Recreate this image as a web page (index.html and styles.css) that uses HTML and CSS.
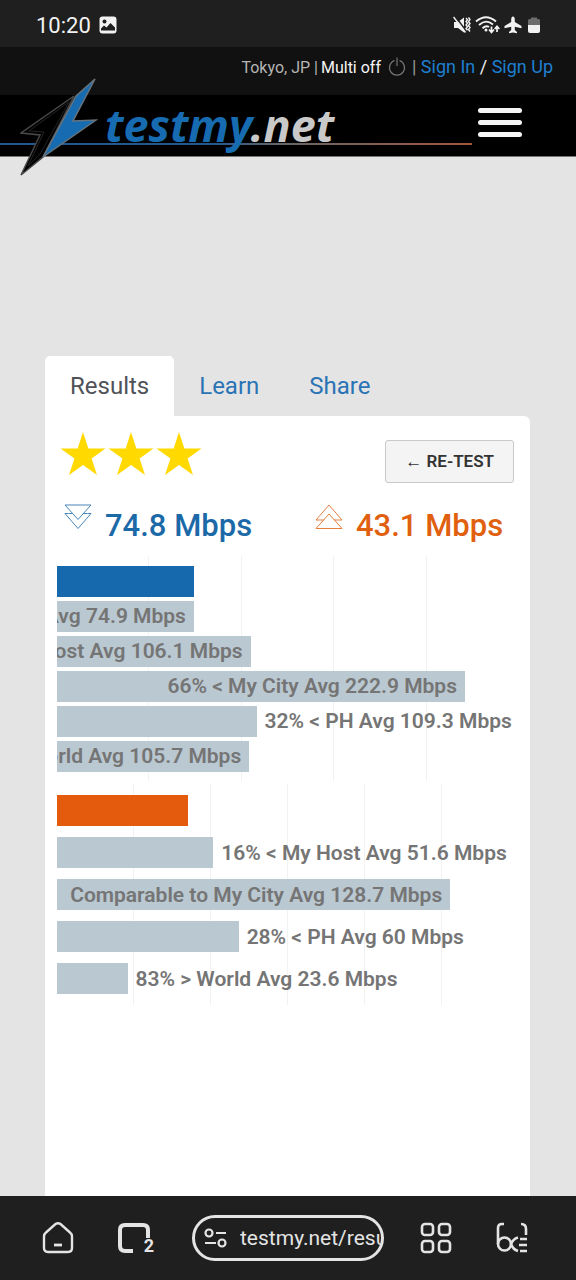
FILE: index.html
```html
<!DOCTYPE html>
<html lang="en">
<head>
<meta charset="utf-8">
<meta name="viewport" content="width=device-width, initial-scale=1">
<title>testmy.net results</title>
<link rel="stylesheet" href="styles.css">
</head>
<body>
<div class="status-bar">
  <span class="clock">10:20</span>
  <svg width="18" height="18" viewBox="0 0 18 18"><rect x="0.5" y="0.5" width="17" height="17" rx="3" fill="#f2f2f2"/><circle cx="5.500" cy="5.500" r="2" fill="#1f1f1f"/><path d="M2 14.500V12.500L5 9.500L7.500 11.500L11.500 7L16 11.500V14.500Z" fill="#1f1f1f"/></svg>
  <div class="status-icons">
    <svg width="18" height="18" viewBox="0 0 18 18" fill="none" stroke="#f2f2f2"><path d="M1 6H5L11 1.500V16.500L5 12H1Z" fill="#f2f2f2" stroke="none"/><path d="M2 0L14 16" stroke="#1f1f1f" stroke-width="1.500"/><path d="M0.500 1L12.500 16.500" stroke-width="1.500"/><path d="M13 2l1.500 1.800L13 5.500l1.500 1.800L13 9l1.500 1.800L13 12.500l1.500 1.800M15.500 1.500L17 3.500l-1.500 2L17 7.500l-1.500 2 1.500 2-1.500 2 1.500 2" stroke-width="1.400"/></svg>
    <svg width="25" height="18" viewBox="0 0 25 18" fill="none" stroke="#f2f2f2" stroke-width="1.900"><path d="M1 5.500Q11 -3 21 5.500M4 9Q11 2.500 18 8.500M7.500 12.200Q11 9 14 11"/><circle cx="11" cy="14" r="1.500" fill="#f2f2f2" stroke="none"/><path d="M16.500 10.500V16M14 13.500L16.500 16.500L19 13.500M22 16V10.500M19.700 13L22 10.200L24.400 13" stroke-width="1.700"/></svg>
    <svg width="18" height="18" viewBox="0 0 18 18" fill="#f2f2f2"><path d="M9 0.500C10.200 0.500 10.800 2 10.800 3.500V6L17.500 10V12.300L10.800 10.800V14L13 16V17.300L9 16.500L5 17.300V16L7.200 14V10.800L0.500 12.300V10L7.200 6V3.500C7.200 2 7.800 0.500 9 0.500Z"/></svg>
    <svg class="battery" width="12" height="16" viewBox="0 0 12 16"><path d="M3 2V0.500H9V2H10.500Q12 2 12 3.500V8H0V3.500Q0 2 1.500 2Z" fill="#6d6d6d"/><path d="M0 8H12V14Q12 16 10 16H2Q0 16 0 14Z" fill="#f2f2f2"/></svg>
  </div>
</div>

<main class="page">
  <div class="account-bar">
    <span class="location">Tokyo, JP |</span>
    <span class="multi">Multi off</span>
    <svg class="power" width="18" height="20" viewBox="0 0 18 20" fill="none" stroke="#777" stroke-width="1.200"><path d="M6.500 3.500A7.500 7.500 0 1 0 11.500 3.500M9 0.500V9"/></svg>
    <span class="auth">| <a href="#">Sign In</a> <b>/</b> <a href="#">Sign Up</a></span>
  </div>
  <header class="site-header">
    <a class="logo" href="#" aria-label="testmy.net">
      <svg class="bolt" width="78" height="98" viewBox="0 0 78 98">
        <path d="M54 18L1 55L20 57L1 97L23 79Z" fill="#020202" stroke="#484848" stroke-width="1.500"/>
        <path d="M49 24L9 53L24 54L8 88L20 76Z" fill="#000" stroke="#222"/>
        <path d="M75 1L56 18L23 79L76 42L53 43Z" fill="#176bb0" stroke="#68737c" stroke-width="1.500"/>
      </svg>
      <span class="wordmark">testmy<span class="tld">.net</span></span>
    </a>
    <div class="rule"></div>
    <button class="menu" aria-label="Menu"><span></span><span></span><span></span></button>
  </header>

  <section class="results">
    <nav class="tabs">
      <a class="tab active" href="#">Results</a>
      <a class="tab" href="#">Learn</a>
      <a class="tab" href="#">Share</a>
    </nav>
    <div class="card">
      <div class="rating">
        <div class="stars">
          <svg width="48" height="44" viewBox="0 0 48 44"><path d="M24 0L29.300 16.500H46.500L32.600 26.500L38 43L24 33L10 43L15.400 26.500L1.500 16.500H18.700Z"/></svg>
          <svg width="48" height="44" viewBox="0 0 48 44"><path d="M24 0L29.300 16.500H46.500L32.600 26.500L38 43L24 33L10 43L15.400 26.500L1.500 16.500H18.700Z"/></svg>
          <svg width="48" height="44" viewBox="0 0 48 44"><path d="M24 0L29.300 16.500H46.500L32.600 26.500L38 43L24 33L10 43L15.400 26.500L1.500 16.500H18.700Z"/></svg>
        </div>
        <button class="retest">← RE-TEST</button>
      </div>
      <div class="speeds">
        <div class="speed down"><svg width="28" height="26" viewBox="0 0 28 26"><path d="M1 1H27L14 15.500ZM4.500 9.500H1L14 24.500L27 9.500H23.500M4.500 9.500H9M19 9.500H23.500"/></svg><span>74.8 Mbps</span></div>
        <div class="speed up"><svg width="28" height="26" viewBox="0 0 28 26"><path d="M1 24.500H27L14 10ZM9 16H1L14 1L27 16H19"/></svg><span>43.1 Mbps</span></div>
      </div>

      <div class="chart">
        <div class="grid"><i></i><i></i><i></i><i></i><i></i></div>
        <div class="bars download">
          <div class="row"><div class="bar blue" style="width:29.700%"></div></div>
          <div class="row"><div class="bar" style="width:29.700%"><span>Avg 74.9 Mbps</span></div></div>
          <div class="row"><div class="bar" style="width:42%"><span>Host Avg 106.1 Mbps</span></div></div>
          <div class="row"><div class="bar" style="width:88.500%"><span>66% &lt; My City Avg 222.9 Mbps</span></div></div>
          <div class="row"><div class="bar" style="width:43.300%"></div><span>32% &lt; PH Avg 109.3 Mbps</span></div>
          <div class="row"><div class="bar" style="width:41.700%"><span>World Avg 105.7 Mbps</span></div></div>
        </div>
      </div>

      <div class="chart">
        <div class="grid"><i></i><i></i><i></i><i></i><i></i><i></i></div>
        <div class="bars upload">
          <div class="row"><div class="bar orange" style="width:28.500%"></div></div>
          <div class="row"><div class="bar" style="width:33.900%"></div><span>16% &lt; My Host Avg 51.6 Mbps</span></div>
          <div class="row"><div class="bar" style="width:85.300%"><span>Comparable to My City Avg 128.7 Mbps</span></div></div>
          <div class="row"><div class="bar" style="width:39.400%"></div><span>28% &lt; PH Avg 60 Mbps</span></div>
          <div class="row"><div class="bar" style="width:15.300%"></div><span>83% &gt; World Avg 23.6 Mbps</span></div>
        </div>
      </div>
    </div>
  </section>
</main>

<nav class="browser-bar">
  <button aria-label="Home"><svg width="32" height="34" viewBox="0 0 32 34" fill="none" stroke="#e4e4e4" stroke-width="2.400"><path d="M13.500 3Q16 1.500 18.500 3L28 11.500Q30 13 30 15.500V27Q30 31 26 31H6Q2 31 2 27V15.500Q2 13 4 11.500Z"/><path d="M12 24H20" stroke-width="2.800"/></svg></button>
  <button aria-label="Tabs" class="tab-count"><svg width="36" height="34" viewBox="0 0 36 34" fill="none" stroke="#e4e4e4" stroke-width="4"><path d="M17 30H9Q4 30 4 25V9Q4 4 9 4H27Q32 4 32 9V17"/></svg><span>2</span></button>
  <div class="address">
    <svg width="24" height="20" viewBox="0 0 24 20" fill="none" stroke="#e4e4e4" stroke-width="2.200"><circle cx="5" cy="5" r="3.500"/><path d="M12 5H22M1 15H12"/><circle cx="18" cy="15" r="3.500"/></svg>
    <input type="text" value="testmy.net/results" aria-label="Address">
  </div>
  <button aria-label="Apps"><svg width="32" height="32" viewBox="0 0 32 32" fill="none" stroke="#e4e4e4" stroke-width="2.600"><rect x="2" y="2" width="11" height="11" rx="3"/><rect x="19" y="2" width="11" height="11" rx="3"/><rect x="2" y="19" width="11" height="11" rx="3"/><rect x="19" y="19" width="11" height="11" rx="3"/></svg></button>
  <button aria-label="Reading mode"><svg width="32" height="32" viewBox="0 0 32 32" fill="none" stroke="#e4e4e4" stroke-width="2.600"><path d="M8 2H6Q2 2 2 6V22"/><circle cx="8.500" cy="22" r="6.500"/><path d="M22 15.500Q17 17 15 22Q17 27.500 22 29M25 2Q30 2 30 7V13M24 17H31M23 23H31M24 29H31"/></svg></button>
</nav>
</body>
</html>
```

FILE: styles.css
```css
* { box-sizing: border-box; }

body {
  margin: 0;
  height: 100vh;
  display: flex;
  flex-direction: column;
  background: #e4e4e4;
  font-family: Roboto, "Liberation Sans", sans-serif;
  overflow: hidden;
}

a { color: #1e7fd0; text-decoration: none; }
button { border: 0; background: none; padding: 0; font: inherit; color: inherit; }
svg { display: block; flex: none; }

.status-bar {
  display: flex;
  align-items: center;
  gap: 8px;
  height: 47px;
  flex: none;
  padding: 3px 36px 0;
  background: #1f1f1f;
  color: #f2f2f2;
}
.clock { font-size: 22px; }
.status-icons { display: flex; align-items: center; gap: 4px; margin-left: auto; }
.battery { margin-left: 2px; }

.page { flex: 1; min-height: 0; overflow: hidden; display: flex; flex-direction: column; }

.account-bar {
  display: flex;
  align-items: center;
  height: 48px;
  flex: none;
  padding: 0 23px 8px 0;
  justify-content: flex-end;
  background: #111;
  color: #999;
  font-size: 16px;
  white-space: nowrap;
}
.location { color: #b5b5b5; margin-right: 3px; }
.multi { color: #f5f5f5; margin-right: 7px; }
.power { margin-right: 6px; }
.auth { font-size: 18px; line-height: 20px; }
.auth b { color: #eee; font-weight: 400; }

.site-header {
  position: relative;
  display: flex;
  justify-content: space-between;
  height: 62px;
  flex: none;
  padding: 0 54px 0 20px;
  background: #000;
  border-bottom: 1px solid #777;
}
.logo { position: relative; z-index: 1; display: flex; gap: 7px; color: #176bb0; }
.bolt { margin-top: -17px; }
.wordmark {
  font: italic 700 45px/60px "Noto Sans", sans-serif;
}
.tld { color: #c9c9c9; }
.rule {
  position: absolute;
  left: 0;
  right: 104px;
  top: 48px;
  height: 2px;
  background: linear-gradient(90deg, #24588c 45%, #666 60%, #a0563a);
}
.menu { display: flex; flex-direction: column; gap: 7px; padding-top: 13px; }
.menu span { width: 44px; height: 5px; border-radius: 3px; background: #f4f4f4; }

.results {
  flex: 1;
  display: flex;
  flex-direction: column;
  margin: 199px 46px 0 45px;
}
.tabs { display: flex; }
.tab {
  padding: 0 25px;
  font-size: 24px;
  line-height: 60px;
  color: #2a73b5;
}
.tab.active { background: #fff; color: #505257; border-radius: 5px 5px 0 0; }

.card {
  flex: 1;
  padding: 16px 12px 0;
  background: #fff;
  border-radius: 0 6px 0 0;
}
.rating { display: flex; justify-content: space-between; padding: 0 4px 0 2px; }
.stars { display: flex; fill: #ffd900; }
.retest {
  margin-top: 8px;
  height: 43px;
  padding: 0 19px;
  border: 1px solid #c9c9c9;
  border-radius: 3px;
  background: #f4f4f4;
  color: #333;
  font-size: 17px;
  font-weight: 600;
}

.speeds { display: grid; grid-template-columns: 251px 1fr; margin: 21px 0 0 7px; }
.speed { display: flex; gap: 13px; font-size: 31px; line-height: 36px; font-weight: 500; }
.speed span { padding-top: 4px; }
.speed svg { fill: none; stroke: currentColor; stroke-width: 1; opacity: 0.8; }
.down { color: #1c69a8; }
.up { color: #e0600f; }

.chart { display: grid; margin-bottom: 3px; }
.speeds + .chart { margin-top: 12px; }
.grid, .bars { grid-area: 1 / 1; }
.grid { display: flex; }
.grid i { flex: 1; border-right: 1px solid #f2f2f2; }
.grid i:last-child { border-right: 0; }
.bars { display: flex; flex-direction: column; }
.download { gap: 3px; padding: 9px 0; }
.upload { gap: 11px; padding: 11px 0; }
.row {
  display: flex;
  align-items: center;
  gap: 8px;
  height: 31px;
  font-size: 21px;
  font-weight: 600;
  color: #757575;
  white-space: nowrap;
}
.download .row { height: 32px; }
.bar {
  display: flex;
  flex: none;
  align-items: center;
  justify-content: flex-end;
  height: 31px;
  padding-right: 8px;
  background: #bac8d1;
  overflow: hidden;
}
.blue { background: #1669ad; }
.orange { background: #e45b0d; }

.browser-bar {
  display: grid;
  grid-template-columns: 76px 76px 1fr 76px 76px;
  align-items: center;
  height: 84px;
  flex: none;
  padding: 0 26px 0 20px;
  background: #1f1f1f;
  color: #e4e4e4;
}
.browser-bar button { display: flex; justify-content: center; }
.browser-bar .tab-count { position: relative; }
.tab-count span {
  position: absolute;
  right: 18px;
  bottom: 0;
  font-size: 18px;
  line-height: 18px;
  font-weight: 700;
}
.address {
  display: flex;
  align-items: center;
  gap: 12px;
  height: 46px;
  margin: 0 14px 0 20px;
  padding-left: 9px;
  border: 3px solid #e4e4e4;
  border-radius: 23px;
  overflow: hidden;
}
.address input {
  flex: 1;
  min-width: 0;
  padding: 0;
  border: 0;
  outline: 0;
  background: none;
  color: #e4e4e4;
  font: 21px/28px Roboto, sans-serif;
}
```
